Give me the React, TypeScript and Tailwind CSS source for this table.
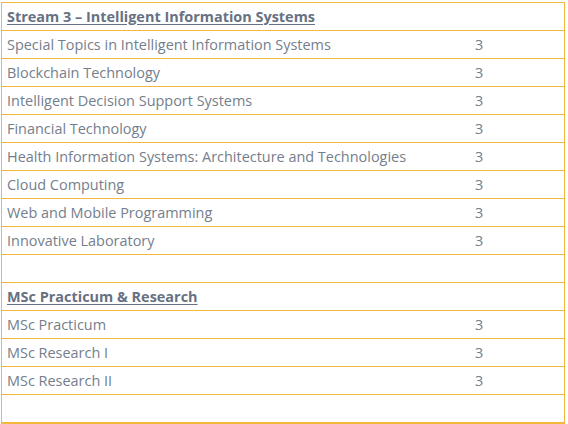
import React from "react";

type Row = { name?: string; credits?: string; header?: boolean };

const rows: Row[] = [
  { name: "Stream 3 – Intelligent Information Systems", header: true },
  { name: "Special Topics in Intelligent Information Systems", credits: "3" },
  { name: "Blockchain Technology", credits: "3" },
  { name: "Intelligent Decision Support Systems", credits: "3" },
  { name: "Financial Technology", credits: "3" },
  { name: "Health Information Systems: Architecture and Technologies", credits: "3" },
  { name: "Cloud Computing", credits: "3" },
  { name: "Web and Mobile Programming", credits: "3" },
  { name: "Innovative Laboratory", credits: "3" },
  {},
  { name: "MSc Practicum & Research", header: true },
  { name: "MSc Practicum", credits: "3" },
  { name: "MSc Research I", credits: "3" },
  { name: "MSc Research II", credits: "3" },
  {},
];

export default function App() {
  return (
    <div
      className="w-[568px] h-[424px] bg-white pl-[1px] pt-[2px] overflow-hidden"
      style={{ fontFamily: '"Open Sans", "Noto Sans", sans-serif' }}
    >
      <div className="w-[564px] border-l border-r border-b-2 border-[#f3b93d] box-border">
        {rows.map((r, i) => (
          <div
            key={i}
            className="h-[28px] border-t border-[#f3b93d] flex items-center box-border text-[14.45px] text-[#747e8c]"
          >
            <div className="w-[467px] pl-[5px]">
              {r.header ? (
                <span className="font-bold underline text-[#677182] underline-offset-[2px]">{r.name}</span>
              ) : (
                <span>{r.name}</span>
              )}
            </div>
            <div className="pl-[6px]">{r.credits}</div>
          </div>
        ))}
      </div>
    </div>
  );
}
